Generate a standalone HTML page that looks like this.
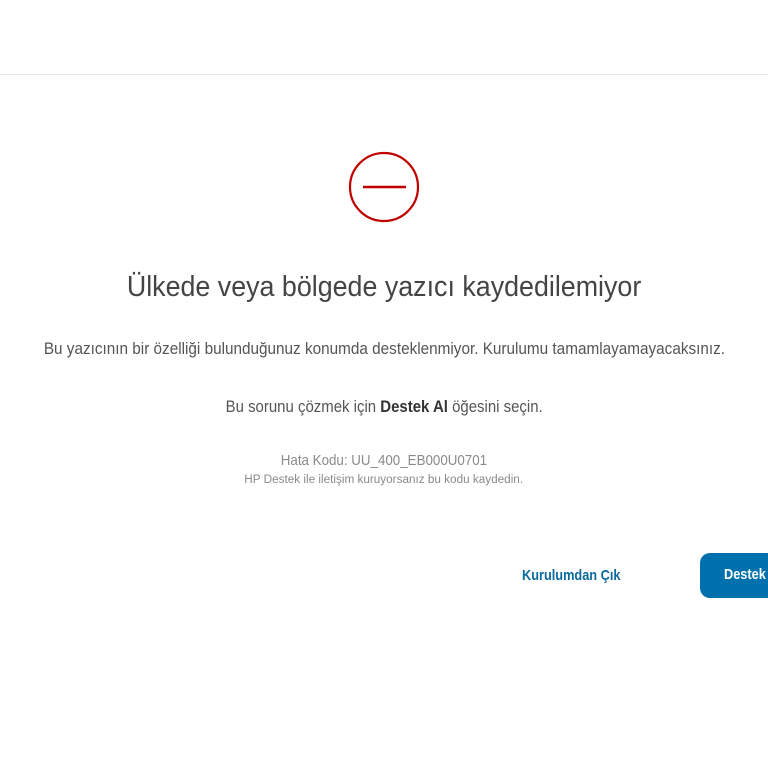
<!DOCTYPE html><html><head><meta charset="utf-8"><style>
body{margin:0;width:768px;height:768px;background:#fff;overflow:hidden;position:relative;font-family:"Liberation Sans",sans-serif;}
.l{position:absolute;left:0;width:768px;text-align:center;white-space:nowrap;}
.l span{display:inline-block;transform-origin:center;}
</style></head><body>
<div style="position:absolute;left:0;top:74px;width:768px;height:1px;background:#e6e6e6"></div>
<svg style="position:absolute;left:340px;top:143px" width="88" height="88"><circle cx="44" cy="44" r="34" fill="none" stroke="#c00000" stroke-width="2.2"/><line x1="23" y1="44" x2="66" y2="44" stroke="#c00000" stroke-width="2.5"/></svg>
<div class="l" style="top:271px;font-size:29px;color:#444"><span style="transform:scaleX(0.925)">Ülkede veya bölgede yazıcı kaydedilemiyor</span></div>
<div class="l" style="top:339px;font-size:17px;color:#555"><span style="transform:scaleX(0.9)">Bu yazıcının bir özelliği bulunduğunuz konumda desteklenmiyor. Kurulumu tamamlayamayacaksınız.</span></div>
<div class="l" style="top:397px;font-size:17px;color:#555"><span style="transform:scaleX(0.88)">Bu sorunu çözmek için <b style="color:#333">Destek Al</b> öğesini seçin.</span></div>
<div class="l" style="top:452px;font-size:15px;color:#8a8a8a"><span style="transform:scaleX(0.89)">Hata Kodu: UU_400_EB000U0701</span></div>
<div class="l" style="top:474px;font-size:11.5px;color:#8a8a8a"><span style="transform:scaleX(1.02)">HP Destek ile iletişim kuruyorsanız bu kodu kaydedin.</span></div>
<div style="position:absolute;left:522px;top:567px;font-size:15px;font-weight:bold;color:#0a6a9e;transform:scaleX(0.85);transform-origin:left;white-space:nowrap">Kurulumdan Çık</div>
<div style="position:absolute;left:700px;top:553px;width:90px;height:45px;border-radius:10px;background:#0171ad;"></div>
<div style="position:absolute;left:724px;top:566px;color:#fff;font-size:15px;font-weight:bold;transform:scaleX(0.85);transform-origin:left;white-space:nowrap">Destek</div>
</body></html>
